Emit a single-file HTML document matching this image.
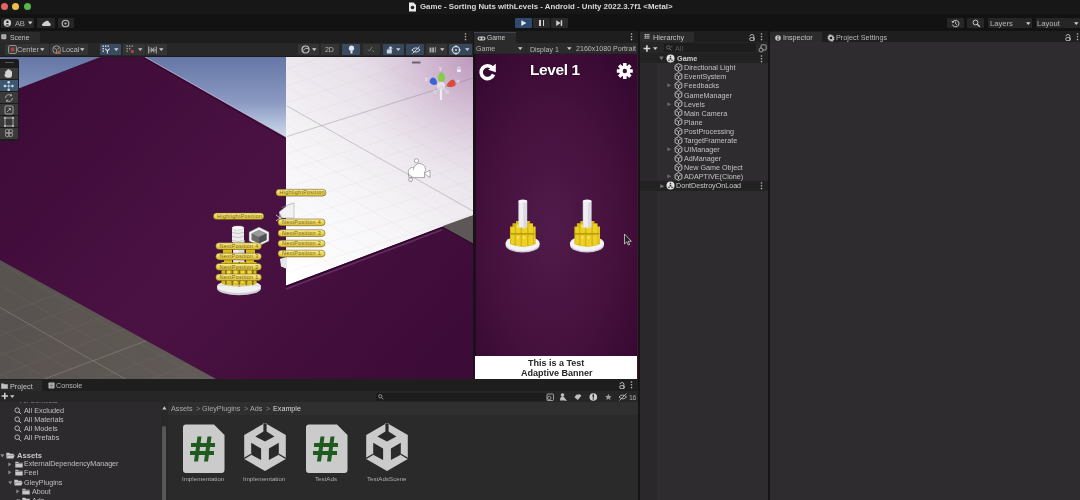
<!DOCTYPE html>
<html><head><meta charset="utf-8">
<style>
*{margin:0;padding:0;box-sizing:border-box}
html,body{width:1080px;height:500px;overflow:hidden;background:#141414;font-family:"Liberation Sans",sans-serif;color:#c4c4c4}
.a{position:absolute}
.t{position:absolute;white-space:nowrap;line-height:1;will-change:transform}
.btn{position:absolute;background:#272727;border-radius:1px}
.sbtn{position:absolute;background:#343434;border-radius:1px}
.blue{background:#3a4a63}
</style></head><body>
<!-- title bar + toolbar -->
<div class="a" style="left:0;top:0;width:1080px;height:31px;background:#121212"></div><div class="a" style="left:0;top:0;width:1080px;height:14.4px;background:#161716"></div>
<div class="a" style="left:1px;top:3px;width:7px;height:7px;border-radius:50%;background:#e36464"></div>
<div class="a" style="left:12px;top:3px;width:7px;height:7px;border-radius:50%;background:#e8bd4a"></div>
<div class="a" style="left:24px;top:3px;width:7px;height:7px;border-radius:50%;background:#55b64c"></div>


<!-- TOP -->
<svg class="a" style="left:408px;top:2px" width="9" height="10" viewBox="0 0 9 10"><path d="M1 0.5h4.5l2.5 2.5v6.5h-7z" fill="#e8e8e8"/><circle cx="4.5" cy="5.5" r="1.8" fill="#222"/></svg>
<div class="t" style="left:419.5px;top:2.5px;font-size:7.85px;font-weight:bold;color:#d8d8d8">Game - Sorting Nuts withLevels - Android - Unity 2022.3.7f1 &lt;Metal&gt;</div>

<div class="btn" style="left:1px;top:18px;width:33px;height:10px;background:#262626"></div>
<svg class="a" style="left:3px;top:19px" width="9" height="8" viewBox="0 0 9 8"><circle cx="4.4" cy="4" r="3.7" fill="#d0d0d0"/><circle cx="4.4" cy="2.9" r="1.2" fill="#262626"/><path d="M2.4 6.4q2-2.2 4 0z" fill="#262626"/></svg>
<div class="t" style="left:15.2px;top:19.6px;font-size:7.6px;color:#aaaaaa;letter-spacing:-0.2px">AB</div>
<svg class="a" style="left:27.5px;top:21px" width="5" height="4"><path d="M0 0.5h4.5l-2.25 3z" fill="#d0d0d0"/></svg>
<div class="btn" style="left:37px;top:18px;width:18px;height:10px;background:#262626"></div>
<svg class="a" style="left:41.5px;top:20px" width="9" height="6" viewBox="0 0 9 6"><path d="M1.2 6a1.3 1.3 0 0 1 0-2.6a1.5 1.5 0 0 1 1.8-1.3a2.3 2.3 0 0 1 4.3 0.6a1.7 1.7 0 0 1 0.3 3.3z" fill="#d0d0d0"/></svg>
<div class="btn" style="left:57.5px;top:18px;width:16.5px;height:10px;background:#262626"></div>
<svg class="a" style="left:61px;top:18.5px" width="9" height="9" viewBox="0 0 9 9"><circle cx="4.5" cy="4.5" r="3.3" fill="none" stroke="#bdbdbd" stroke-width="1.1"/><circle cx="4.5" cy="4.5" r="1.1" fill="#bdbdbd"/></svg>

<div class="btn" style="left:514.5px;top:18px;width:17.5px;height:10px;background:#2f4a6e"></div>
<svg class="a" style="left:520.5px;top:20px" width="6" height="6.5"><path d="M0.3 0.2L5.4 3.1L0.3 6z" fill="#e6eaf0"/></svg>
<div class="btn" style="left:532.5px;top:18px;width:17px;height:10px;background:#2a2a2a"></div>
<div class="a" style="left:538.8px;top:20.3px;width:1.8px;height:5.5px;background:#d0d0d0"></div>
<div class="a" style="left:542.5px;top:20.3px;width:1.8px;height:5.5px;background:#d0d0d0"></div>
<div class="btn" style="left:550.5px;top:18px;width:17px;height:10px;background:#2a2a2a"></div>
<svg class="a" style="left:555.8px;top:20px" width="7" height="6.5"><path d="M0.2 0.2L4.6 3.1L0.2 6z" fill="#d0d0d0"/><rect x="4.7" y="0.3" width="1.5" height="5.6" fill="#d0d0d0"/></svg>

<div class="btn" style="left:947px;top:18px;width:17px;height:10px;background:#262626"></div>
<svg class="a" style="left:951px;top:18.5px" width="9" height="9" viewBox="0 0 9 9"><path d="M1.6 3.2A3.3 3.3 0 1 1 1.5 5.6" fill="none" stroke="#c8c8c8" stroke-width="1"/><path d="M0.3 1.8l1.6 2.4l1.6-1.6z" fill="#c8c8c8"/><path d="M4.6 2.6v2.1l1.3 1" fill="none" stroke="#c8c8c8" stroke-width="0.9"/></svg>
<div class="btn" style="left:967px;top:18px;width:17px;height:10px;background:#262626"></div>
<svg class="a" style="left:971.5px;top:19px" width="9" height="9" viewBox="0 0 9 9"><circle cx="3.5" cy="3.5" r="2.4" fill="none" stroke="#c8c8c8" stroke-width="1"/><path d="M5.3 5.3L7.8 7.8" stroke="#c8c8c8" stroke-width="1.3"/></svg>
<div class="btn" style="left:988px;top:18px;width:44px;height:10px;background:#262626"></div>
<div class="t" style="left:990px;top:19.5px;font-size:7.6px;color:#b8b8b8">Layers</div>
<svg class="a" style="left:1025.5px;top:21.5px" width="5" height="4"><path d="M0 0.3h4.5l-2.25 2.8z" fill="#d0d0d0"/></svg>
<div class="btn" style="left:1035.5px;top:18px;width:44.5px;height:10px;background:#262626"></div>
<div class="t" style="left:1037px;top:19.5px;font-size:7.6px;color:#b8b8b8">Layout</div>
<svg class="a" style="left:1073.5px;top:21.5px" width="5" height="4"><path d="M0 0.3h4.5l-2.25 2.8z" fill="#d0d0d0"/></svg>

<!-- tab bar row -->
<div class="a" style="left:0;top:31px;width:1080px;height:12px;background:#1e1e1f"></div>

<!-- ===== SCENE PANEL ===== -->
<div class="a" style="left:0;top:32px;width:40px;height:11px;background:#2b2b2b"></div>
<svg class="a" style="left:1px;top:34px" width="6" height="6"><rect x="0.3" y="0.3" width="5" height="5" rx="1" fill="#b8b8b8"/><path d="M0.3 2.8h5M2.8 0.3v5" stroke="#8a8a8a" stroke-width="0.5"/></svg>
<div class="t" style="left:10px;top:34.7px;font-size:6.9px;color:#c4c4c4">Scene</div>
<svg class="a" style="left:463.5px;top:33px" width="3" height="8"><circle cx="1.5" cy="1" r="0.8" fill="#bbb"/><circle cx="1.5" cy="3.8" r="0.8" fill="#bbb"/><circle cx="1.5" cy="6.6" r="0.8" fill="#bbb"/></svg>
<div class="a" style="left:0;top:43px;width:473px;height:14px;background:#272727;border-bottom:1px solid #1c1c1c"></div>
<!-- center/local -->
<div class="sbtn" style="left:4.5px;top:44px;width:44px;height:11px"></div>
<svg class="a" style="left:7.5px;top:45px" width="9" height="9"><rect x="0.6" y="0.6" width="7.8" height="7.8" rx="1.2" fill="none" stroke="#9a9a9a" stroke-width="1"/><rect x="2.5" y="2.5" width="4" height="4" fill="#9a4c40"/></svg>
<div class="t" style="left:17px;top:46px;font-size:7.3px;color:#b8b8b8">Center</div>
<svg class="a" style="left:40.3px;top:48px" width="5" height="4"><path d="M0 0.3h4.5l-2.25 2.8z" fill="#d0d0d0"/></svg>
<div class="sbtn" style="left:50px;top:44px;width:38.3px;height:11px"></div>
<svg class="a" style="left:52px;top:45px" width="10" height="10"><circle cx="4.6" cy="4.6" r="3.8" fill="none" stroke="#9a9a9a" stroke-width="1"/><path d="M1.8 2.6L4.6 4.6L7.4 2.6M4.6 4.6V8.4" stroke="#9a9a9a" stroke-width="0.9" fill="none"/><rect x="5.6" y="5.8" width="3" height="3.2" fill="#a9623c"/></svg>
<div class="t" style="left:62.3px;top:46px;font-size:7.3px;color:#b8b8b8">Local</div>
<svg class="a" style="left:80.3px;top:48px" width="5" height="4"><path d="M0 0.3h4.5l-2.25 2.8z" fill="#d0d0d0"/></svg>
<!-- snapping group -->
<div class="sbtn" style="left:100px;top:44px;width:21px;height:11px;background:#3a4a60"></div>
<svg class="a" style="left:102px;top:45px" width="9" height="9"><g fill="#d8dee8"><rect x="0.5" y="0.5" width="1.4" height="1.4"/><rect x="3" y="0.5" width="1.4" height="1.4"/><rect x="5.5" y="0.5" width="1.4" height="1.4"/><rect x="0.5" y="3" width="1.4" height="1.4"/><rect x="0.5" y="5.5" width="1.4" height="1.4"/></g><path d="M3.3 3.6L5.4 6L7.6 3.6M5.4 6V8.6" stroke="#d8dee8" stroke-width="1.1" fill="none"/></svg>
<svg class="a" style="left:113.8px;top:48px" width="5" height="4"><path d="M0 0.3h4.5l-2.25 2.8z" fill="#d0d6e0"/></svg>
<div class="sbtn" style="left:123px;top:44px;width:21.5px;height:11px"></div>
<svg class="a" style="left:125.5px;top:45px" width="9" height="9"><g fill="#a8a8a8"><rect x="0.5" y="0.5" width="1.3" height="1.3"/><rect x="3" y="0.5" width="1.3" height="1.3"/><rect x="5.5" y="0.5" width="1.3" height="1.3"/><rect x="0.5" y="3" width="1.3" height="1.3"/><rect x="0.5" y="5.5" width="1.3" height="1.3"/><rect x="3" y="3" width="1.3" height="1.3"/></g><rect x="4.8" y="5" width="3" height="3" fill="#a04050"/></svg>
<svg class="a" style="left:137.6px;top:48px" width="5" height="4"><path d="M0 0.3h4.5l-2.25 2.8z" fill="#c0c0c0"/></svg>
<div class="sbtn" style="left:146px;top:44px;width:20.5px;height:11px"></div>
<svg class="a" style="left:148px;top:45.5px" width="9" height="8"><path d="M0.7 0.5v7M8.3 0.5v7M0.7 4h7.6M2.6 1.5l1.9 2.5l1.9-2.5M2.6 6.5l1.9-2.5l1.9 2.5" stroke="#a8a8a8" stroke-width="1.1" fill="none"/></svg>
<svg class="a" style="left:158.8px;top:48px" width="5" height="4"><path d="M0 0.3h4.5l-2.25 2.8z" fill="#c8c8c8"/></svg>
<!-- right tool group -->
<div class="sbtn" style="left:297.7px;top:44px;width:21px;height:11px"></div>
<svg class="a" style="left:300.5px;top:45px" width="9" height="9"><circle cx="4.5" cy="4.5" r="3.5" fill="none" stroke="#c0c0c0" stroke-width="1.2"/><path d="M2 5.5q2.5-3.5 5.5-1.8" stroke="#c0c0c0" stroke-width="0.9" fill="none"/></svg>
<svg class="a" style="left:311.5px;top:48px" width="5" height="4"><path d="M0 0.3h4.5l-2.25 2.8z" fill="#d0d0d0"/></svg>
<div class="sbtn" style="left:321.3px;top:44px;width:18px;height:11px"></div>
<div class="t" style="left:324.6px;top:46px;font-size:7px;color:#b8b8b8;letter-spacing:-0.2px">2D</div>
<div class="sbtn" style="left:342px;top:44px;width:18px;height:11px;background:#3a4a60"></div>
<svg class="a" style="left:347.5px;top:45px" width="7" height="10"><circle cx="3.5" cy="3.2" r="2.6" fill="#dfe6ee"/><rect x="2.5" y="5.5" width="2" height="3" fill="#dfe6ee"/></svg>
<div class="sbtn" style="left:362.8px;top:44px;width:17.6px;height:11px"></div>
<svg class="a" style="left:367px;top:46px" width="9" height="7"><path d="M1 3.5l1.5 1.5l2.5-4M5.5 4.5l1.5 1.5" stroke="#777" stroke-width="1" fill="none"/></svg>
<div class="sbtn" style="left:383.3px;top:44px;width:20.6px;height:11px;background:#37475c"></div>
<svg class="a" style="left:385.5px;top:45px" width="9" height="10"><path d="M0.8 4.5h5v4h-5z" fill="#cfd5de"/><path d="M4.5 1l2.5 2.5h-1.6v2h-1.8v-2h-1.6z" fill="#cfd5de"/></svg>
<svg class="a" style="left:396.3px;top:48px" width="5" height="4"><path d="M0 0.3h4.5l-2.25 2.8z" fill="#ccd2dc"/></svg>
<div class="sbtn" style="left:406.4px;top:44px;width:17.2px;height:11px;background:#37475c"></div>
<svg class="a" style="left:410.5px;top:45.5px" width="10" height="8"><path d="M0.8 4q4-4.2 8.2 0q-4 4.2-8.2 0z" fill="none" stroke="#cfd5de" stroke-width="1"/><path d="M1.5 7.5L8.5 0.7" stroke="#cfd5de" stroke-width="1"/></svg>
<div class="sbtn" style="left:426px;top:44px;width:21px;height:11px"></div>
<svg class="a" style="left:429px;top:46px" width="9" height="7"><path d="M0.5 1.5h2v5h-2zM3.2 1.5h2v5h-2z" fill="#a8a8a8"/><path d="M6.5 1v5.5" stroke="#a8a8a8" stroke-width="0.8"/></svg>
<svg class="a" style="left:440px;top:48px" width="5" height="4"><path d="M0 0.3h4.5l-2.25 2.8z" fill="#c8c8c8"/></svg>
<div class="sbtn" style="left:449px;top:44px;width:22.5px;height:11px;background:#37475c"></div>
<svg class="a" style="left:451px;top:44.5px" width="10" height="10"><circle cx="5" cy="5" r="3.6" fill="none" stroke="#d0d6de" stroke-width="1.1"/><path d="M5 0.3v2.3M5 7.4v2.3M0.3 5h2.3M7.4 5h2.3" stroke="#d0d6de" stroke-width="1.1"/><circle cx="5" cy="5" r="1" fill="#d0d6de"/></svg>
<svg class="a" style="left:464.5px;top:48px" width="5" height="4"><path d="M0 0.3h4.5l-2.25 2.8z" fill="#ccd2dc"/></svg>

<!-- scene view -->
<div id="sceneview" class="a" style="left:0;top:57px;width:473px;height:322px;background:#47103f;overflow:hidden">
<svg width="473" height="322" viewBox="0 57 473 322" style="position:absolute;left:0;top:0">
<defs>
<linearGradient id="sky" x1="0" y1="57" x2="0" y2="140" gradientUnits="userSpaceOnUse"><stop offset="0" stop-color="#6676a6"/><stop offset="0.55" stop-color="#8a9ac2"/><stop offset="1" stop-color="#d4e0f0"/></linearGradient>
<linearGradient id="wp" x1="300" y1="280" x2="473" y2="57" gradientUnits="userSpaceOnUse"><stop offset="0" stop-color="#ffffff"/><stop offset="0.4" stop-color="#f5f3f6"/><stop offset="0.75" stop-color="#e6dee8"/><stop offset="1" stop-color="#d8c8da"/></linearGradient>
<radialGradient id="wp2" cx="473" cy="57" r="120" gradientUnits="userSpaceOnUse"><stop offset="0" stop-color="#b98fb8" stop-opacity="0.85"/><stop offset="0.5" stop-color="#c8a8c8" stop-opacity="0.4"/><stop offset="1" stop-color="#d8c8d8" stop-opacity="0"/></radialGradient>
<linearGradient id="pur" x1="60" y1="57" x2="420" y2="379" gradientUnits="userSpaceOnUse"><stop offset="0" stop-color="#3e0b38"/><stop offset="0.5" stop-color="#4a1243"/><stop offset="1" stop-color="#3d0b37"/></linearGradient>
<linearGradient id="gnd" x1="0" y1="260" x2="210" y2="379" gradientUnits="userSpaceOnUse"><stop offset="0" stop-color="#58534f"/><stop offset="1" stop-color="#625c58"/></linearGradient>
</defs>
<rect x="0" y="57" width="473" height="322" fill="url(#pur)"/>
<path d="M0 57H101.5L0 96Z" fill="url(#sky)"/><path d="M101.5 57L0 96" stroke="#2a0626" stroke-width="0.8" opacity="0.8"/>
<path d="M145 57H286V137Z" fill="url(#sky)"/>
<path d="M145 57L286 137" stroke="#e8eef8" stroke-width="0.8" opacity="0.7"/><path d="M144 58.2L285.5 138.6" stroke="#24061f" stroke-width="0.9" opacity="0.7"/>
<path d="M286 57H473V215.5L286 285.4Z" fill="url(#wp)"/><path d="M286 57H473V215.5L286 285.4Z" fill="url(#wp2)"/>
<clipPath id="wc"><path d="M286 57H473V215.5L286 285.4Z"/></clipPath><g clip-path="url(#wc)" stroke="#a99eab" stroke-width="0.5" opacity="0.15"><line x1="287.0" y1="0.5" x2="473.0" y2="-58.1"/><line x1="287.0" y1="17.5" x2="473.0" y2="-41.1"/><line x1="287.0" y1="34.5" x2="473.0" y2="-24.1"/><line x1="287.0" y1="51.5" x2="473.0" y2="-7.1"/><line x1="287.0" y1="68.5" x2="473.0" y2="9.9"/><line x1="287.0" y1="85.5" x2="473.0" y2="26.9"/><line x1="287.0" y1="102.5" x2="473.0" y2="43.9"/><line x1="287.0" y1="119.5" x2="473.0" y2="60.9"/><line x1="287.0" y1="136.5" x2="473.0" y2="77.9"/><line x1="287.0" y1="153.5" x2="473.0" y2="94.9"/><line x1="287.0" y1="170.5" x2="473.0" y2="111.9"/><line x1="287.0" y1="187.5" x2="473.0" y2="128.9"/><line x1="287.0" y1="204.5" x2="473.0" y2="145.9"/><line x1="287.0" y1="221.5" x2="473.0" y2="162.9"/><line x1="287.0" y1="238.5" x2="473.0" y2="179.9"/><line x1="287.0" y1="255.5" x2="473.0" y2="196.9"/><line x1="287.0" y1="272.5" x2="473.0" y2="213.9"/><line x1="287.0" y1="289.5" x2="473.0" y2="230.9"/><line x1="287.0" y1="306.5" x2="473.0" y2="247.9"/><line x1="287.0" y1="323.5" x2="473.0" y2="264.9"/><line x1="287.0" y1="340.5" x2="473.0" y2="281.9"/><line x1="287.0" y1="357.5" x2="473.0" y2="298.9"/><line x1="287.0" y1="-160.0" x2="473.0" y2="-54.7"/><line x1="287.0" y1="-141.0" x2="473.0" y2="-35.7"/><line x1="287.0" y1="-122.0" x2="473.0" y2="-16.7"/><line x1="287.0" y1="-103.0" x2="473.0" y2="2.3"/><line x1="287.0" y1="-84.0" x2="473.0" y2="21.3"/><line x1="287.0" y1="-65.0" x2="473.0" y2="40.3"/><line x1="287.0" y1="-46.0" x2="473.0" y2="59.3"/><line x1="287.0" y1="-27.0" x2="473.0" y2="78.3"/><line x1="287.0" y1="-8.0" x2="473.0" y2="97.3"/><line x1="287.0" y1="11.0" x2="473.0" y2="116.3"/><line x1="287.0" y1="30.0" x2="473.0" y2="135.3"/><line x1="287.0" y1="49.0" x2="473.0" y2="154.3"/><line x1="287.0" y1="68.0" x2="473.0" y2="173.3"/><line x1="287.0" y1="87.0" x2="473.0" y2="192.3"/><line x1="287.0" y1="106.0" x2="473.0" y2="211.3"/><line x1="287.0" y1="125.0" x2="473.0" y2="230.3"/><line x1="287.0" y1="144.0" x2="473.0" y2="249.3"/><line x1="287.0" y1="163.0" x2="473.0" y2="268.3"/><line x1="287.0" y1="182.0" x2="473.0" y2="287.3"/><line x1="287.0" y1="201.0" x2="473.0" y2="306.3"/><line x1="287.0" y1="220.0" x2="473.0" y2="325.3"/><line x1="287.0" y1="239.0" x2="473.0" y2="344.3"/></g>
<g clip-path="url(#wc)"><path d="M287 136.5L473 78" stroke="#8a7f8a" stroke-width="0.6" opacity="0.6"/>
<path d="M287 106L473 211" stroke="#8a7f8a" stroke-width="0.6" opacity="0.6"/></g>
<path d="M442 226.2L473 215.3V243.5Z" fill="#5d5757"/>
<path d="M286 286.6L442 227.4" fill="none" stroke="#2c0628" stroke-width="1.2"/>
<path d="M286 288.9L442 229.7" fill="none" stroke="#6a3566" stroke-width="1.6" opacity="0.85"/><path d="M442 227L473 244" fill="none" stroke="#2c0628" stroke-width="0.8"/>
<path d="M0 260L216 379H0Z" fill="url(#gnd)"/>
<clipPath id="gc"><path d="M0 260L216 379H0Z"/></clipPath>
<g clip-path="url(#gc)" stroke="#7e7872" stroke-width="0.5" opacity="0.35"><line x1="0.0" y1="175.5" x2="220.0" y2="301.1"/><line x1="0.0" y1="197.5" x2="220.0" y2="323.1"/><line x1="0.0" y1="219.5" x2="220.0" y2="345.1"/><line x1="0.0" y1="241.5" x2="220.0" y2="367.1"/><line x1="0.0" y1="263.5" x2="220.0" y2="389.1"/><line x1="0.0" y1="285.5" x2="220.0" y2="411.1"/><line x1="0.0" y1="329.5" x2="220.0" y2="455.1"/><line x1="0.0" y1="351.5" x2="220.0" y2="477.1"/><line x1="0.0" y1="373.5" x2="220.0" y2="499.1"/><line x1="0.0" y1="395.5" x2="220.0" y2="521.1"/><line x1="0.0" y1="417.5" x2="220.0" y2="543.1"/><line x1="0.0" y1="315.6" x2="220.0" y2="233.1"/><line x1="0.0" y1="335.6" x2="220.0" y2="253.1"/><line x1="0.0" y1="355.6" x2="220.0" y2="273.1"/><line x1="0.0" y1="375.6" x2="220.0" y2="293.1"/><line x1="0.0" y1="415.6" x2="220.0" y2="333.1"/><line x1="0.0" y1="435.6" x2="220.0" y2="353.1"/><line x1="0.0" y1="455.6" x2="220.0" y2="373.1"/><line x1="0.0" y1="475.6" x2="220.0" y2="393.1"/><line x1="0.0" y1="495.6" x2="220.0" y2="413.1"/><line x1="0.0" y1="515.6" x2="220.0" y2="433.1"/><line x1="0.0" y1="535.6" x2="220.0" y2="453.1"/></g>
<g clip-path="url(#gc)" stroke="#a09a92" stroke-width="0.7" opacity="0.6"><path d="M0 307.5L125 379"/><path d="M45 378.75L160 335.6"/></g>
</svg>

<svg width="473" height="322" viewBox="0 57 473 322" style="position:absolute;left:0;top:0">
<defs>
<linearGradient id="lbl" x1="0" y1="0" x2="0" y2="1"><stop offset="0" stop-color="#faf0a0"/><stop offset="0.45" stop-color="#eed85a"/><stop offset="1" stop-color="#d6b834"/></linearGradient>
</defs>
<!-- gizmo -->
<rect x="412" y="61.5" width="8.5" height="2" fill="#6e6470"/>
<path d="M441 85V100" stroke="#eee" stroke-width="2.2"/>
<circle cx="441" cy="86" r="4" fill="#e4e0e6"/>
<path d="M441 86L437.5 90.5M441 86L446 91" stroke="#d8d4da" stroke-width="1.3"/>
<circle cx="435" cy="92" r="2.2" fill="#d5d0d8"/><circle cx="447" cy="92" r="2.2" fill="#d5d0d8"/>
<path d="M438 80.5Q437.5 73 441.5 72Q445.5 73 445 80.5Q441.5 83 438 80.5Z" fill="#86cc4a"/>
<path d="M429.5 82Q430 77.5 433.5 77.5Q437 78.5 437 84Q432 86.5 429.5 82Z" fill="#3a62d6"/>
<path d="M446.5 86Q448 80.5 453 79.5Q456 81 455.5 85.5Q450.5 88.5 446.5 86Z" fill="#d84c3c"/>
<text x="439" y="70" font-size="5.5" fill="#f4f4f4" font-family="Liberation Sans">y</text>
<text x="425" y="81" font-size="5.5" fill="#f4f4f4" font-family="Liberation Sans">z</text>
<text x="456.5" y="82.5" font-size="5.5" fill="#f4f4f4" font-family="Liberation Sans">x</text>
<path d="M457.5 69.5v-1.2a1.4 1.4 0 0 1 2.8 0v1.2" fill="none" stroke="#f0eef2" stroke-width="0.7"/><rect x="457" y="69.3" width="3.8" height="2.8" fill="#f0eef2"/>
<!-- cloud (directional light / camera?) -->
<g stroke="#8e8a92" stroke-width="0.7" fill="#fdfdfd">
<circle cx="416.5" cy="160.8" r="2.1"/>
<path d="M424 173.5L430 170.2V177.6Z"/>
<circle cx="412.8" cy="172" r="4.6"/>
<circle cx="419.5" cy="169.5" r="6"/>
<rect x="412" y="170" width="12.5" height="7.5" rx="2" stroke="none"/>
<path d="M408.5 173.5V176.5Q408.5 177.6 410 177.6H424.5V172" fill="none"/>
<circle cx="410.5" cy="179.6" r="2" fill="none"/>
</g>
<!-- left nut -->
<ellipse cx="239" cy="288.5" rx="22" ry="6.8" fill="#cfcdd6"/>
<ellipse cx="239" cy="286.5" rx="22" ry="6.5" fill="#f2f2f4"/>
<rect x="233" y="240" width="11.5" height="32" fill="#dcdce2"/>
<rect x="234.5" y="240" width="4" height="32" fill="#f0f0f4"/>
<path d="M221.5 262h35v22q-17.5 5-35 0z" fill="#d8bc1c"/>
<g fill="#8a7010"><rect x="225" y="262" width="1.6" height="23"/><rect x="231.5" y="262" width="1.6" height="24"/><rect x="238.5" y="262" width="1.6" height="24.5"/><rect x="245.5" y="262" width="1.6" height="24"/><rect x="252" y="262" width="1.6" height="23"/></g>
<g fill="#f0d840"><rect x="227" y="266" width="3" height="16"/><rect x="234" y="266" width="3" height="17"/><rect x="241" y="266" width="3" height="17"/><rect x="248" y="266" width="3" height="16"/></g>
<g fill="#d8bc1c"><rect x="223" y="249" width="9" height="5"/><rect x="246" y="249" width="9" height="5"/><rect x="224" y="259" width="8" height="4"/><rect x="246" y="259" width="8" height="4"/></g>
<path d="M218 286q3-2 5 0q3-2 5 0q3-2 5 0q3-2 5 0q3-2 5 0q3-2 5 0q3-2 5 0q3-2 5 0q2-1 3 0" fill="none" stroke="#d0d0d6" stroke-width="0.8"/>
<!-- database icon -->
<g><ellipse cx="238" cy="228" rx="6" ry="2" fill="#f6f6f6"/><rect x="232" y="228" width="12" height="14" fill="#ececec"/><path d="M232 232.5q6 2 12 0M232 236.5q6 2 12 0M232 240.5q6 2 12 0" stroke="#9a9a9a" stroke-width="0.5" fill="none"/><ellipse cx="238" cy="228" rx="6" ry="2" fill="#fafafa" stroke="#aaa" stroke-width="0.4"/></g>
<!-- cube icon -->
<path d="M259 227L269 232V241L259 246L249 241V232Z" fill="#f4f4f4" stroke="#555" stroke-width="0.5"/>
<path d="M259 230L266.5 233.5V240L259 243.5L251.5 240V233.5Z" fill="#6a6a6a"/>
<path d="M251.5 233.5L259 237L266.5 233.5L259 230Z" fill="#9a9a9a"/>
<path d="M259 237V243.5L266.5 240V233.5Z" fill="#505050"/>
<!-- right cluster -->
<path d="M279 212L288 205L294 203V218H282Z" fill="#f2f2f2" stroke="#9a9a9a" stroke-width="0.5"/>
<path d="M281.5 207.5L294 203" stroke="#bbb" stroke-width="0.4"/>
<path d="M276 215l8 6M276 221l8-6M280 213v10" stroke="#e8e8e8" stroke-width="0.8"/>
<path d="M280 259L287 256.5V269L281 266.5Z" fill="#e6e6ea"/><path d="M280 259L287 256.5" stroke="#999" stroke-width="0.4"/>
<!-- labels -->
<g font-family="Liberation Sans" font-size="5.4" fill="#76662a" letter-spacing="0.3">
<rect x="213.4" y="212.9" width="50.4" height="6.7" rx="3.3" fill="url(#lbl)" stroke="#5a4808" stroke-width="0.5"/><text x="217" y="218">HighlightPosition</text>
<rect x="215.8" y="242.8" width="45.6" height="6.7" rx="3.3" fill="url(#lbl)" stroke="#5a4808" stroke-width="0.5"/><text x="219.5" y="247.8">NextPosition  4</text>
<rect x="215.8" y="253.2" width="45.6" height="6.7" rx="3.3" fill="url(#lbl)" stroke="#5a4808" stroke-width="0.5"/><text x="219.5" y="258.2">NextPosition  3</text>
<rect x="215.8" y="263.5" width="45.6" height="6.7" rx="3.3" fill="url(#lbl)" stroke="#5a4808" stroke-width="0.5"/><text x="219.5" y="268.5">NextPosition  2</text>
<rect x="215.8" y="274" width="45.6" height="6.7" rx="3.3" fill="url(#lbl)" stroke="#5a4808" stroke-width="0.5"/><text x="219.5" y="279">NextPosition  1</text>
<rect x="276" y="189.3" width="50" height="6.8" rx="3.4" fill="url(#lbl)" stroke="#5a4808" stroke-width="0.5"/><text x="279.5" y="194.4">HighlightPosition</text>
<rect x="278" y="219" width="47" height="6.7" rx="3.3" fill="url(#lbl)" stroke="#5a4808" stroke-width="0.5"/><text x="282" y="224">NextPosition  4</text>
<rect x="278" y="229.8" width="47" height="6.7" rx="3.3" fill="url(#lbl)" stroke="#5a4808" stroke-width="0.5"/><text x="282" y="234.8">NextPosition  3</text>
<rect x="278" y="240.2" width="47" height="6.7" rx="3.3" fill="url(#lbl)" stroke="#5a4808" stroke-width="0.5"/><text x="282" y="245.2">NextPosition  2</text>
<rect x="278" y="250.2" width="47" height="6.7" rx="3.3" fill="url(#lbl)" stroke="#5a4808" stroke-width="0.5"/><text x="282" y="255.2">NextPosition  1</text>
</g>
</svg>


</div>
<!-- tool palette -->
<div class="a" style="left:0;top:58.5px;width:19px;height:82px;background:#1c1c1c;border-radius:0 2px 2px 0"></div>
<div class="a" style="left:4.5px;top:61.5px;width:9px;height:1.5px;background:#555"></div>
<div class="a" style="left:0;top:68.2px;width:17.5px;height:10.8px;background:#3a3a3a"></div>
<div class="a" style="left:0;top:80.3px;width:17.5px;height:10.8px;background:#3e566f"></div>
<div class="a" style="left:0;top:92.3px;width:17.5px;height:10.8px;background:#3a3a3a"></div>
<div class="a" style="left:0;top:104.3px;width:17.5px;height:10.8px;background:#3a3a3a"></div>
<div class="a" style="left:0;top:116.3px;width:17.5px;height:10.8px;background:#3a3a3a"></div>
<div class="a" style="left:0;top:128.3px;width:17.5px;height:10.8px;background:#3a3a3a"></div>
<svg class="a" style="left:0;top:68px" width="18" height="72">
<path d="M5.2 6.5v-2.6q0-0.8 0.7-0.8q0.7 0 0.7 0.8v-1.6q0-0.8 0.7-0.8q0.7 0 0.7 0.8v-0.6q0-0.8 0.7-0.8q0.7 0 0.7 0.8v0.8q0-0.8 0.7-0.8q0.7 0 0.7 0.8v1.2q0-0.7 0.6-0.7q0.6 0 0.6 0.7v3.2q0 2.8-2.8 2.8h-1.8q-2.4 0-3.2-3z" fill="#d4d4d4"/>
<g fill="#c8dcf0"><circle cx="8.7" cy="14.3" r="1.3"/><circle cx="8.7" cy="21.7" r="1.3"/><circle cx="5" cy="18" r="1.3"/><circle cx="12.4" cy="18" r="1.3"/><circle cx="8.7" cy="18" r="0.9"/></g><path d="M8.7 15.5v5M6.2 18h5" stroke="#a8c0d8" stroke-width="0.6"/>
<path d="M5.5 30a3.6 3.6 0 0 1 6-2.5M12.5 30a3.6 3.6 0 0 1-6 2.5" fill="none" stroke="#b0b0b0" stroke-width="0.9"/><path d="M11.8 25.8v2.4h-2.4zM6.2 34.2v-2.4h2.4z" fill="#b0b0b0"/>
<rect x="5" y="38" width="8" height="8" rx="1" fill="none" stroke="#b0b0b0" stroke-width="0.9"/><path d="M7 44l3.5-3.5M8.5 40.5h2v2" stroke="#b0b0b0" stroke-width="0.9" fill="none"/>
<path d="M5 50.5v7M13 50.5v7M5.5 50h7M5.5 58h7" stroke="#b0b0b0" stroke-width="0.9"/><g fill="#b0b0b0"><rect x="4" y="49" width="2" height="2"/><rect x="12" y="49" width="2" height="2"/><rect x="4" y="57" width="2" height="2"/><rect x="12" y="57" width="2" height="2"/></g>
<circle cx="7.3" cy="63.3" r="2" fill="none" stroke="#b0b0b0" stroke-width="0.8"/><circle cx="10.7" cy="63.3" r="2" fill="none" stroke="#b0b0b0" stroke-width="0.8"/><circle cx="7.3" cy="66.7" r="2" fill="none" stroke="#b0b0b0" stroke-width="0.8"/><circle cx="10.7" cy="66.7" r="2" fill="none" stroke="#b0b0b0" stroke-width="0.8"/>
</svg>

<!-- dividers -->
<div class="a" style="left:473px;top:31px;width:1px;height:469px;background:#141414"></div>

<!-- ===== GAME PANEL ===== -->
<div class="a" style="left:474px;top:32px;width:41.5px;height:10.5px;background:#2b2b2b;border-top:1px solid #3a4558"></div>
<svg class="a" style="left:477px;top:35.5px" width="9" height="5"><rect x="0.5" y="0.5" width="8" height="4" rx="2" fill="#c8c8c8"/><circle cx="2.8" cy="2.5" r="1" fill="#2b2b2b"/><circle cx="6.2" cy="2.5" r="1" fill="#2b2b2b"/></svg>
<div class="t" style="left:487.3px;top:35.0px;font-size:6.7px;color:#c8c8c8">Game</div>
<svg class="a" style="left:630px;top:33px" width="3" height="8"><circle cx="1.5" cy="1" r="0.8" fill="#bbb"/><circle cx="1.5" cy="3.8" r="0.8" fill="#bbb"/><circle cx="1.5" cy="6.6" r="0.8" fill="#bbb"/></svg>
<div class="a" style="left:474px;top:42.5px;width:164px;height:11.5px;background:#262626"></div>
<div class="a" style="left:474px;top:43px;width:51px;height:10px;background:#2b2b2b"></div>
<div class="t" style="left:476px;top:45.5px;font-size:7.1px;color:#b8b8b8">Game</div>
<svg class="a" style="left:518.3px;top:47px" width="5" height="4"><path d="M0 0.3h4.5l-2.25 2.8z" fill="#d0d0d0"/></svg>
<div class="a" style="left:527px;top:43px;width:47px;height:10px;background:#2b2b2b"></div>
<div class="t" style="left:529.9px;top:45.5px;font-size:7px;color:#b8b8b8">Display 1</div>
<svg class="a" style="left:567.4px;top:47px" width="5" height="4"><path d="M0 0.3h4.5l-2.25 2.8z" fill="#d0d0d0"/></svg>
<div class="a" style="left:574.5px;top:43px;width:62.5px;height:10px;background:#2b2b2b"></div>
<div class="t" style="left:575.7px;top:45.5px;font-size:7.1px;color:#b8b8b8">2160x1080 Portrait</div>
<div id="gameview" class="a" style="left:474px;top:54px;width:164px;height:325px;background:#47103f;overflow:hidden">
<div class="a" style="left:0;top:0;width:163px;height:325px;background:radial-gradient(ellipse 110px 210px at 78px 175px,#501a4a 0%,#48123f 50%,#360931 100%)"></div>
<svg width="163" height="325" viewBox="474 54 163 325" style="position:absolute;left:0;top:0">
<!-- refresh icon -->
<path d="M492.5 68.2A6.4 6.4 0 1 0 493.5 74.5" fill="none" stroke="#fff" stroke-width="3.6"/>
<path d="M488.2 69.8L495.8 63.8L495.8 72.2Z" fill="#fff"/>
<!-- gear -->
<g transform="translate(624.8,71)">
<circle r="5.6" fill="#fff"/>
<g fill="#fff"><rect x="-1.8" y="-8" width="3.6" height="16" rx="0.6"/><rect x="-1.8" y="-8" width="3.6" height="16" rx="0.6" transform="rotate(45)"/><rect x="-1.8" y="-8" width="3.6" height="16" rx="0.6" transform="rotate(90)"/><rect x="-1.8" y="-8" width="3.6" height="16" rx="0.6" transform="rotate(135)"/></g>
<circle r="2.2" fill="#3f0d3a"/>
</g>
<g transform="translate(0,0)">
<ellipse cx="522.6" cy="245" rx="17" ry="7.6" fill="#cfcdd8"/>
<ellipse cx="522.6" cy="243.3" rx="17" ry="7.6" fill="#f3f2f6"/>
<path d="M510 226.5h2.5v-3.2h3.5v-2.3h4v1.5h6v-1.5h4v2.3h3v3.2h2.6V244q-12.8 5.5-25.6 0z" fill="#d7b612"/>
<g fill="#edd026"><rect x="511" y="227" width="3.6" height="6" rx="1"/><rect x="516" y="224" width="4.5" height="9" rx="1"/><rect x="522" y="225" width="5" height="8" rx="1"/><rect x="528.5" y="224" width="4.5" height="9" rx="1"/><rect x="511" y="235" width="3.6" height="9" rx="1"/><rect x="516" y="235" width="4.5" height="11" rx="1"/><rect x="522" y="235" width="5" height="11.5" rx="1"/><rect x="528.5" y="235" width="4.5" height="10.5" rx="1"/><rect x="534" y="227" width="1.2" height="16" /></g>
<g fill="#f6e468" opacity="0.8"><rect x="517" y="225" width="2" height="3"/><rect x="523" y="226" width="2" height="3"/><rect x="517" y="236" width="2" height="3"/><rect x="523" y="236" width="2" height="3"/></g>
<path d="M510.5 233.8h24.6" stroke="#b39510" stroke-width="1"/>
<rect x="518.4" y="201" width="8.8" height="26.4" fill="#dcdbe3"/>
<rect x="519.3" y="201" width="4" height="26.4" fill="#efeff3"/>
<ellipse cx="522.8" cy="201" rx="4.4" ry="1.6" fill="#f6f6f8"/>
</g>
<g transform="translate(64.4,0)">
<ellipse cx="522.6" cy="245" rx="17" ry="7.6" fill="#cfcdd8"/>
<ellipse cx="522.6" cy="243.3" rx="17" ry="7.6" fill="#f3f2f6"/>
<path d="M510 226.5h2.5v-3.2h3.5v-2.3h4v1.5h6v-1.5h4v2.3h3v3.2h2.6V244q-12.8 5.5-25.6 0z" fill="#d7b612"/>
<g fill="#edd026"><rect x="511" y="227" width="3.6" height="6" rx="1"/><rect x="516" y="224" width="4.5" height="9" rx="1"/><rect x="522" y="225" width="5" height="8" rx="1"/><rect x="528.5" y="224" width="4.5" height="9" rx="1"/><rect x="511" y="235" width="3.6" height="9" rx="1"/><rect x="516" y="235" width="4.5" height="11" rx="1"/><rect x="522" y="235" width="5" height="11.5" rx="1"/><rect x="528.5" y="235" width="4.5" height="10.5" rx="1"/><rect x="534" y="227" width="1.2" height="16" /></g>
<g fill="#f6e468" opacity="0.8"><rect x="517" y="225" width="2" height="3"/><rect x="523" y="226" width="2" height="3"/><rect x="517" y="236" width="2" height="3"/><rect x="523" y="236" width="2" height="3"/></g>
<path d="M510.5 233.8h24.6" stroke="#b39510" stroke-width="1"/>
<rect x="518.4" y="201" width="8.8" height="26.4" fill="#dcdbe3"/>
<rect x="519.3" y="201" width="4" height="26.4" fill="#efeff3"/>
<ellipse cx="522.8" cy="201" rx="4.4" ry="1.6" fill="#f6f6f8"/>
</g>
<!-- cursor -->
<path d="M624.5 234v10l2.3-2.2l1.6 3.3l1.3-0.6l-1.5-3.2h3.2z" fill="#222" stroke="#e8e8e8" stroke-width="0.7"/>
</svg>
<div class="a" style="left:0;top:0;width:1.6px;height:302px;background:#1c0f1b"></div>
<div class="t" style="left:56.3px;top:8.2px;font-size:15.5px;letter-spacing:-0.4px;font-weight:bold;color:#fff;text-shadow:0 0 1.5px #1a0018">Level 1</div>
<div class="a" style="left:0.5px;top:302px;width:162.5px;height:23px;background:#fff"></div>
<div class="t" style="left:54.3px;top:304.5px;font-size:9px;font-weight:bold;color:#262626">This is a Test</div>
<div class="t" style="left:46.6px;top:315.2px;font-size:9px;font-weight:bold;color:#262626">Adaptive Banner</div>

</div>

<!-- ===== PROJECT PANEL ===== -->
<div class="a" style="left:0;top:379px;width:638px;height:12px;background:#1e1e1f"></div>
<div class="a" style="left:0;top:380px;width:42px;height:11px;background:#2b2b2b"></div>
<svg class="a" style="left:1px;top:382.5px" width="7" height="6"><path d="M0.2 0.5h2.5l0.7 0.8h3.4v4.5H0.2z" fill="#c0c0c0"/></svg>
<div class="t" style="left:9.6px;top:382.5px;font-size:7.3px;color:#c4c4c4">Project</div>
<svg class="a" style="left:47.5px;top:382px" width="7" height="7"><rect x="0.5" y="0.5" width="6" height="6" rx="0.8" fill="#c0c0c0"/><path d="M1.7 2h3.6M1.7 3.5h3.6M1.7 5h3.6" stroke="#3a3a3a" stroke-width="0.5"/></svg>
<div class="t" style="left:55.8px;top:382px;font-size:7.2px;color:#b8b8b8">Console</div>
<svg class="a" style="left:619px;top:381.5px" width="6" height="7"><path d="M0.9 2.2Q1.2 0.5 3 0.5Q4.9 0.5 4.9 2.4V6.6" fill="none" stroke="#c4c4c4" stroke-width="0.9"/><rect x="0.7" y="3.6" width="4.6" height="3" rx="1.4" fill="none" stroke="#c4c4c4" stroke-width="0.9"/></svg>
<svg class="a" style="left:629.5px;top:381px" width="3" height="8"><circle cx="1.5" cy="1" r="0.8" fill="#bbb"/><circle cx="1.5" cy="3.8" r="0.8" fill="#bbb"/><circle cx="1.5" cy="6.6" r="0.8" fill="#bbb"/></svg>
<div class="a" style="left:0;top:391px;width:638px;height:11px;background:#262626"></div>
<svg class="a" style="left:1px;top:392px" width="8" height="8"><path d="M3.8 0.8v6.4M0.6 4h6.4" stroke="#d4d4d4" stroke-width="1.5"/></svg>
<svg class="a" style="left:10px;top:394.5px" width="5" height="4"><path d="M0 0.3h4.5l-2.25 2.8z" fill="#c8c8c8"/></svg>
<div class="a" style="left:375.5px;top:392.8px;width:170px;height:8.3px;background:#1c1c1c;border-radius:2px"></div>
<svg class="a" style="left:377.5px;top:394.3px" width="6" height="6"><circle cx="2.3" cy="2.3" r="1.6" fill="none" stroke="#aaa" stroke-width="0.8"/><path d="M3.5 3.5L5.3 5.3" stroke="#aaa" stroke-width="0.9"/></svg>
<svg class="a" style="left:546px;top:391.5px" width="91" height="11">
<rect x="1" y="2" width="6.5" height="6.5" rx="1" fill="none" stroke="#bbb" stroke-width="0.8"/><circle cx="3.3" cy="6" r="1.7" fill="#262626" stroke="#bbb" stroke-width="0.7"/>
<circle cx="16.5" cy="3" r="1.8" fill="#c0c0c0"/><path d="M14 8.5q0-4 2.5-4q2 0 2.5 2l1.5 2z" fill="#c0c0c0"/><path d="M18 6.5l2.5 2.5" stroke="#c0c0c0" stroke-width="0.9"/>
<path d="M30.5 2.5h3.5l1.5 1.5l-4 4l-3-3z" fill="#c0c0c0" transform="rotate(-5 32 5)"/>
<circle cx="47.3" cy="5" r="3.8" fill="#d0d0d0"/><rect x="46.6" y="2.3" width="1.4" height="3.4" fill="#262626"/><rect x="46.6" y="6.4" width="1.4" height="1.2" fill="#262626"/>
<path d="M62.4 1.8l1 2.2l2.3 0.2l-1.8 1.5l0.6 2.3l-2.1-1.2l-2.1 1.2l0.6-2.3l-1.8-1.5l2.3-0.2z" fill="#9a9a9a"/>
<path d="M73 5q3.5-3.8 7.5 0q-3.5 3.8-7.5 0z" fill="none" stroke="#bbb" stroke-width="0.9"/><path d="M73.5 8.5l7-7" stroke="#bbb" stroke-width="0.9"/>
</svg>
<div class="t" style="left:628.8px;top:393.6px;font-size:7px;color:#aaa;letter-spacing:-0.5px">16</div>
<div class="a" style="left:0;top:402px;width:161px;height:98px;background:#2c2a2c"></div>
<div class="a" style="left:161px;top:402px;width:7px;height:98px;background:#282828"></div>
<svg class="a" style="left:162px;top:405.5px" width="5" height="4"><path d="M0.3 3.4h4.2L2.4 0.3z" fill="#c8c8c8"/></svg>
<div class="a" style="left:162.3px;top:426px;width:4.2px;height:80px;background:#575757;border-radius:2px"></div>
<div class="a" style="left:168px;top:402px;width:470px;height:12.8px;background:#2f2f2f"></div>
<div class="a" style="left:168px;top:414.8px;width:470px;height:85.2px;background:#2b2a2b"></div>
<div class="t" style="left:170.8px;top:404.8px;font-size:7.2px;color:#a8a8a8">Assets</div>
<div class="t" style="left:195.6px;top:404.8px;font-size:7.2px;color:#8a8a8a">&gt;</div>
<div class="t" style="left:201.7px;top:404.8px;font-size:7.2px;color:#a8a8a8">GleyPlugins</div>
<div class="t" style="left:243.8px;top:404.8px;font-size:7.2px;color:#8a8a8a">&gt;</div>
<div class="t" style="left:250px;top:404.8px;font-size:7.2px;color:#a8a8a8">Ads</div>
<div class="t" style="left:266.2px;top:404.8px;font-size:7.2px;color:#8a8a8a">&gt;</div>
<div class="t" style="left:272.5px;top:404.8px;font-size:7.2px;color:#d8d8d8">Example</div>
<div class="a" style="left:20px;top:401.5px;width:60px;height:2.5px;overflow:hidden"><div class="t" style="left:0;top:-4.5px;font-size:7.2px;color:#888">All Conflicts</div></div>
<svg class="a" style="left:13.7px;top:406.8px" width="8" height="8"><circle cx="3.2" cy="3.2" r="2.3" fill="none" stroke="#c0c0c0" stroke-width="0.9"/><path d="M4.9 4.9L7.2 7.2" stroke="#c0c0c0" stroke-width="1"/></svg><div class="t" style="left:24px;top:406.7px;font-size:7.3px;color:#c0c0c0">All Excluded</div>
<svg class="a" style="left:13.7px;top:415.8px" width="8" height="8"><circle cx="3.2" cy="3.2" r="2.3" fill="none" stroke="#c0c0c0" stroke-width="0.9"/><path d="M4.9 4.9L7.2 7.2" stroke="#c0c0c0" stroke-width="1"/></svg><div class="t" style="left:24px;top:415.7px;font-size:7.3px;color:#c0c0c0">All Materials</div>
<svg class="a" style="left:13.7px;top:424.8px" width="8" height="8"><circle cx="3.2" cy="3.2" r="2.3" fill="none" stroke="#c0c0c0" stroke-width="0.9"/><path d="M4.9 4.9L7.2 7.2" stroke="#c0c0c0" stroke-width="1"/></svg><div class="t" style="left:24px;top:424.7px;font-size:7.3px;color:#c0c0c0">All Models</div>
<svg class="a" style="left:13.7px;top:433.8px" width="8" height="8"><circle cx="3.2" cy="3.2" r="2.3" fill="none" stroke="#c0c0c0" stroke-width="0.9"/><path d="M4.9 4.9L7.2 7.2" stroke="#c0c0c0" stroke-width="1"/></svg><div class="t" style="left:24px;top:433.7px;font-size:7.3px;color:#c0c0c0">All Prefabs</div>
<svg class="a" style="left:0px;top:453.5px" width="5" height="4"><path d="M0.2 0.3h4.2L2.3 3.4z" fill="#888"/></svg><svg class="a" style="left:6.3px;top:451.8px" width="9" height="7"><path d="M0.3 0.8h3l0.8 0.9h3.6v1.2H2L0.3 6.2z" fill="#c8c8c8"/><path d="M2 3.2h6.8L7.3 6.5H0.4z" fill="#c8c8c8"/></svg><div class="t" style="left:16.8px;top:452.0px;font-size:7.6px;font-weight:bold;color:#c8c8c8">Assets</div>
<svg class="a" style="left:8px;top:461.5px" width="4" height="5"><path d="M0.3 0.2L3.4 2.3L0.3 4.4z" fill="#888"/></svg><svg class="a" style="left:14.7px;top:460.8px" width="8" height="7"><path d="M0.3 0.8h2.8l0.8 0.9h3.8v4.8H0.3z" fill="#c8c8c8"/><path d="M0.3 2.4h7.4" stroke="#2e2c2e" stroke-width="0.5"/></svg><div class="t" style="left:23.8px;top:460.9px;font-size:7.15px;color:#c0c0c0">ExternalDependencyManager</div>
<svg class="a" style="left:8px;top:470px" width="4" height="5"><path d="M0.3 0.2L3.4 2.3L0.3 4.4z" fill="#888"/></svg><svg class="a" style="left:14.7px;top:469.3px" width="8" height="7"><path d="M0.3 0.8h2.8l0.8 0.9h3.8v4.8H0.3z" fill="#c8c8c8"/><path d="M0.3 2.4h7.4" stroke="#2e2c2e" stroke-width="0.5"/></svg><div class="t" style="left:23.8px;top:469.4px;font-size:7.2px;color:#c0c0c0">Feel</div>
<svg class="a" style="left:7.5px;top:480.5px" width="5" height="4"><path d="M0.2 0.3h4.2L2.3 3.4z" fill="#888"/></svg><svg class="a" style="left:14.2px;top:478.5px" width="9" height="7"><path d="M0.3 0.8h3l0.8 0.9h3.6v1.2H2L0.3 6.2z" fill="#c8c8c8"/><path d="M2 3.2h6.8L7.3 6.5H0.4z" fill="#c8c8c8"/></svg><div class="t" style="left:23.8px;top:478.8px;font-size:7.2px;color:#c0c0c0">GleyPlugins</div>
<svg class="a" style="left:16px;top:489px" width="4" height="5"><path d="M0.3 0.2L3.4 2.3L0.3 4.4z" fill="#888"/></svg><svg class="a" style="left:22.4px;top:487.8px" width="8" height="7"><path d="M0.3 0.8h2.8l0.8 0.9h3.8v4.8H0.3z" fill="#c8c8c8"/><path d="M0.3 2.4h7.4" stroke="#2e2c2e" stroke-width="0.5"/></svg><div class="t" style="left:32.2px;top:487.9px;font-size:7.2px;color:#c0c0c0">About</div>
<svg class="a" style="left:16px;top:498.5px" width="5" height="4"><path d="M0.2 0.3h4.2L2.3 3.4z" fill="#888"/></svg><svg class="a" style="left:22.4px;top:497px" width="9" height="7"><path d="M0.3 0.8h3l0.8 0.9h3.6v1.2H2L0.3 6.2z" fill="#c8c8c8"/><path d="M2 3.2h6.8L7.3 6.5H0.4z" fill="#c8c8c8"/></svg><div class="t" style="left:32.2px;top:497.1px;font-size:7.2px;color:#c0c0c0">Ads</div>
<svg class="a" style="left:183.3px;top:423.5px" width="42" height="49" viewBox="0 0 42 49"><path d="M3 0.5h28l10.5 10.5v35a3 3 0 0 1-3 3h-35.5a3 3 0 0 1-3-3v-42.5a3 3 0 0 1 3-3z" fill="#cbcbcb"/>
<g fill="#1f5a1f"><path d="M14.5 12.5h4l-3.5 25h-4z"/><path d="M24.5 12.5h4l-3.5 25h-4z"/><rect x="8" y="19" width="24" height="4"/><rect x="7" y="27" width="24" height="4"/></g></svg><svg class="a" style="left:244px;top:423.2px" width="42" height="48" viewBox="0 0 41.6 48"><path fill-rule="evenodd" fill="#cbcbcb" d="M20.8 0L41.6 12V36L20.8 48L0 36V12Z M19.2 0H22.4V8.6L30.2 13.4L20.8 18.6L11.1 13.4L19.2 8.6Z M7 19.8L16.9 25.5V37.1L7 31.8Z M34.6 19.8L24.7 25.5V37.1L34.6 31.8Z"/><path d="M0 35.4L7 31.2M41.6 35.4L34.6 31.2" stroke="#2b2a2b" stroke-width="1.3"/></svg><svg class="a" style="left:305.7px;top:423.5px" width="42" height="49" viewBox="0 0 42 49"><path d="M3 0.5h28l10.5 10.5v35a3 3 0 0 1-3 3h-35.5a3 3 0 0 1-3-3v-42.5a3 3 0 0 1 3-3z" fill="#cbcbcb"/>
<g fill="#1f5a1f"><path d="M14.5 12.5h4l-3.5 25h-4z"/><path d="M24.5 12.5h4l-3.5 25h-4z"/><rect x="8" y="19" width="24" height="4"/><rect x="7" y="27" width="24" height="4"/></g></svg><svg class="a" style="left:366.3px;top:423.2px" width="42" height="48" viewBox="0 0 41.6 48"><path fill-rule="evenodd" fill="#cbcbcb" d="M20.8 0L41.6 12V36L20.8 48L0 36V12Z M19.2 0H22.4V8.6L30.2 13.4L20.8 18.6L11.1 13.4L19.2 8.6Z M7 19.8L16.9 25.5V37.1L7 31.8Z M34.6 19.8L24.7 25.5V37.1L34.6 31.8Z"/><path d="M0 35.4L7 31.2M41.6 35.4L34.6 31.2" stroke="#2b2a2b" stroke-width="1.3"/></svg>
<div class="t" style="left:182px;top:475.8px;font-size:6.2px;color:#b0b0b0">Implementation</div>
<div class="t" style="left:243px;top:475.8px;font-size:6.2px;color:#b0b0b0">Implementation</div>
<div class="t" style="left:315px;top:475.8px;font-size:6.2px;color:#b0b0b0">TestAds</div>
<div class="t" style="left:367px;top:475.8px;font-size:6.2px;color:#b0b0b0">TestAdsScene</div>


<!-- ===== HIERARCHY ===== -->
<div class="a" style="left:638px;top:31px;width:2px;height:469px;background:#151515"></div>
<div class="a" style="left:640px;top:32px;width:54px;height:10px;background:#2b2b2b"></div>
<svg class="a" style="left:644px;top:34.3px" width="6" height="5"><path d="M0.3 0.5h5.4M0.3 2.3h5.4M0.3 4.1h5.4" stroke="#aaa" stroke-width="0.9"/><path d="M1.5 0.5v4M4 0.5v4" stroke="#aaa" stroke-width="0.7"/></svg>
<div class="t" style="left:653.3px;top:34.3px;font-size:7.3px;color:#c4c4c4">Hierarchy</div>
<svg class="a" style="left:748.5px;top:34px" width="6" height="7"><path d="M0.9 2.2Q1.2 0.5 3 0.5Q4.9 0.5 4.9 2.4V6.6" fill="none" stroke="#c4c4c4" stroke-width="0.9"/><rect x="0.7" y="3.6" width="4.6" height="3" rx="1.4" fill="none" stroke="#c4c4c4" stroke-width="0.9"/></svg>
<svg class="a" style="left:759.5px;top:33px" width="3" height="8"><circle cx="1.5" cy="1" r="0.8" fill="#bbb"/><circle cx="1.5" cy="3.8" r="0.8" fill="#bbb"/><circle cx="1.5" cy="6.6" r="0.8" fill="#bbb"/></svg>
<div class="a" style="left:640px;top:42px;width:128px;height:11px;background:#262626"></div>
<svg class="a" style="left:643px;top:44.5px" width="8" height="7"><path d="M3.9 0.3v6.4M0.6 3.5h6.6" stroke="#d8d8d8" stroke-width="1.6"/></svg>
<svg class="a" style="left:652.8px;top:46.8px" width="5" height="4"><path d="M0 0.3h4.5l-2.25 2.8z" fill="#d0d0d0"/></svg>
<div class="a" style="left:664.2px;top:43.3px;width:92px;height:8.8px;background:#1d1d1d;border-radius:2px"></div>
<svg class="a" style="left:666px;top:45px" width="7" height="6"><circle cx="2.4" cy="2.4" r="1.7" fill="none" stroke="#777" stroke-width="0.8"/><path d="M3.6 3.6L5.4 5.4" stroke="#777" stroke-width="0.9"/><path d="M5 1.5h1.5" stroke="#777" stroke-width="0.6"/></svg>
<div class="t" style="left:675px;top:44.5px;font-size:7.2px;color:#565656">All</div>
<svg class="a" style="left:757.5px;top:43.5px" width="9" height="9"><rect x="3" y="0.8" width="5.2" height="5.2" rx="1" fill="none" stroke="#bbb" stroke-width="0.8"/><circle cx="3" cy="6" r="2" fill="#262626" stroke="#bbb" stroke-width="0.8"/></svg>
<div class="a" style="left:640px;top:53px;width:128px;height:447px;background:#2e2c2e"></div>
<div class="a" style="left:640px;top:53px;width:17px;height:447px;background:#2a282a"></div>
<div class="a" style="left:640px;top:53px;width:128px;height:9.8px;background:#232223"></div>
<svg class="a" style="left:658.5px;top:56.2px" width="5" height="5"><path d="M0.2 0.5h4.4L2.4 4.2z" fill="#777"/></svg><svg class="a" style="left:666px;top:54.3px" width="9" height="9" viewBox="0 0 9 9"><circle cx="4.5" cy="4.5" r="4" fill="#e4e4e4"/><g fill="#2a2a2a"><path d="M4.5 1.2L5.5 3.2H3.5Z"/><path d="M1.6 6.2L3.4 5.3L3.7 7.2Z"/><path d="M7.4 6.2L5.6 5.3L5.3 7.2Z"/><circle cx="4.5" cy="4.7" r="0.9"/></g></svg>
<div class="t" style="left:676.8px;top:55.3px;font-size:7.3px;font-weight:bold;color:#d0d0d0">Game</div>
<svg class="a" style="left:760px;top:54.5px" width="3" height="8"><circle cx="1.5" cy="1" r="0.8" fill="#bbb"/><circle cx="1.5" cy="3.8" r="0.8" fill="#bbb"/><circle cx="1.5" cy="6.6" r="0.8" fill="#bbb"/></svg>
<!--HITEMS-->
<svg class="a" style="left:673.5px;top:63.00px" width="9" height="9" viewBox="0 0 9 9"><path d="M4.5 0.6L7.9 2.5V6.5L4.5 8.4L1.1 6.5V2.5Z" fill="none" stroke="#bdbdbd" stroke-width="1" stroke-linejoin="round"/><path d="M2.3 3.1L4.5 4.5L6.7 3.1M4.5 4.5V7.2" stroke="#bdbdbd" stroke-width="1" fill="none"/></svg><div class="t" style="left:684px;top:64.30px;font-size:7.2px;color:#c4c4c4">Directional Light</div>
<svg class="a" style="left:673.5px;top:72.08px" width="9" height="9" viewBox="0 0 9 9"><path d="M4.5 0.6L7.9 2.5V6.5L4.5 8.4L1.1 6.5V2.5Z" fill="none" stroke="#bdbdbd" stroke-width="1" stroke-linejoin="round"/><path d="M2.3 3.1L4.5 4.5L6.7 3.1M4.5 4.5V7.2" stroke="#bdbdbd" stroke-width="1" fill="none"/></svg><div class="t" style="left:684px;top:73.38px;font-size:7.2px;color:#c4c4c4">EventSystem</div>
<svg class="a" style="left:667px;top:83.36px" width="5" height="5"><path d="M0.3 0.3L4.2 2.3L0.3 4.3z" fill="#6a6a6a"/></svg><svg class="a" style="left:673.5px;top:81.16px" width="9" height="9" viewBox="0 0 9 9"><path d="M4.5 0.6L7.9 2.5V6.5L4.5 8.4L1.1 6.5V2.5Z" fill="none" stroke="#bdbdbd" stroke-width="1" stroke-linejoin="round"/><path d="M2.3 3.1L4.5 4.5L6.7 3.1M4.5 4.5V7.2" stroke="#bdbdbd" stroke-width="1" fill="none"/></svg><div class="t" style="left:684px;top:82.46px;font-size:7.2px;color:#c4c4c4">Feedbacks</div>
<svg class="a" style="left:673.5px;top:90.24px" width="9" height="9" viewBox="0 0 9 9"><path d="M4.5 0.6L7.9 2.5V6.5L4.5 8.4L1.1 6.5V2.5Z" fill="none" stroke="#bdbdbd" stroke-width="1" stroke-linejoin="round"/><path d="M2.3 3.1L4.5 4.5L6.7 3.1M4.5 4.5V7.2" stroke="#bdbdbd" stroke-width="1" fill="none"/></svg><div class="t" style="left:684px;top:91.54px;font-size:7.2px;color:#c4c4c4">GameManager</div>
<svg class="a" style="left:667px;top:101.52px" width="5" height="5"><path d="M0.3 0.3L4.2 2.3L0.3 4.3z" fill="#6a6a6a"/></svg><svg class="a" style="left:673.5px;top:99.32px" width="9" height="9" viewBox="0 0 9 9"><path d="M4.5 0.6L7.9 2.5V6.5L4.5 8.4L1.1 6.5V2.5Z" fill="none" stroke="#bdbdbd" stroke-width="1" stroke-linejoin="round"/><path d="M2.3 3.1L4.5 4.5L6.7 3.1M4.5 4.5V7.2" stroke="#bdbdbd" stroke-width="1" fill="none"/></svg><div class="t" style="left:684px;top:100.62px;font-size:7.2px;color:#c4c4c4">Levels</div>
<svg class="a" style="left:673.5px;top:108.40px" width="9" height="9" viewBox="0 0 9 9"><path d="M4.5 0.6L7.9 2.5V6.5L4.5 8.4L1.1 6.5V2.5Z" fill="none" stroke="#bdbdbd" stroke-width="1" stroke-linejoin="round"/><path d="M2.3 3.1L4.5 4.5L6.7 3.1M4.5 4.5V7.2" stroke="#bdbdbd" stroke-width="1" fill="none"/></svg><div class="t" style="left:684px;top:109.70px;font-size:7.2px;color:#c4c4c4">Main Camera</div>
<svg class="a" style="left:673.5px;top:117.48px" width="9" height="9" viewBox="0 0 9 9"><path d="M4.5 0.6L7.9 2.5V6.5L4.5 8.4L1.1 6.5V2.5Z" fill="none" stroke="#bdbdbd" stroke-width="1" stroke-linejoin="round"/><path d="M2.3 3.1L4.5 4.5L6.7 3.1M4.5 4.5V7.2" stroke="#bdbdbd" stroke-width="1" fill="none"/></svg><div class="t" style="left:684px;top:118.78px;font-size:7.2px;color:#c4c4c4">Plane</div>
<svg class="a" style="left:673.5px;top:126.56px" width="9" height="9" viewBox="0 0 9 9"><path d="M4.5 0.6L7.9 2.5V6.5L4.5 8.4L1.1 6.5V2.5Z" fill="none" stroke="#bdbdbd" stroke-width="1" stroke-linejoin="round"/><path d="M2.3 3.1L4.5 4.5L6.7 3.1M4.5 4.5V7.2" stroke="#bdbdbd" stroke-width="1" fill="none"/></svg><div class="t" style="left:684px;top:127.86px;font-size:7.2px;color:#c4c4c4">PostProcessing</div>
<svg class="a" style="left:673.5px;top:135.64px" width="9" height="9" viewBox="0 0 9 9"><path d="M4.5 0.6L7.9 2.5V6.5L4.5 8.4L1.1 6.5V2.5Z" fill="none" stroke="#bdbdbd" stroke-width="1" stroke-linejoin="round"/><path d="M2.3 3.1L4.5 4.5L6.7 3.1M4.5 4.5V7.2" stroke="#bdbdbd" stroke-width="1" fill="none"/></svg><div class="t" style="left:684px;top:136.94px;font-size:7.2px;color:#c4c4c4">TargetFramerate</div>
<svg class="a" style="left:667px;top:146.92px" width="5" height="5"><path d="M0.3 0.3L4.2 2.3L0.3 4.3z" fill="#6a6a6a"/></svg><svg class="a" style="left:673.5px;top:144.72px" width="9" height="9" viewBox="0 0 9 9"><path d="M4.5 0.6L7.9 2.5V6.5L4.5 8.4L1.1 6.5V2.5Z" fill="none" stroke="#bdbdbd" stroke-width="1" stroke-linejoin="round"/><path d="M2.3 3.1L4.5 4.5L6.7 3.1M4.5 4.5V7.2" stroke="#bdbdbd" stroke-width="1" fill="none"/></svg><div class="t" style="left:684px;top:146.02px;font-size:7.2px;color:#c4c4c4">UIManager</div>
<svg class="a" style="left:673.5px;top:153.80px" width="9" height="9" viewBox="0 0 9 9"><path d="M4.5 0.6L7.9 2.5V6.5L4.5 8.4L1.1 6.5V2.5Z" fill="none" stroke="#bdbdbd" stroke-width="1" stroke-linejoin="round"/><path d="M2.3 3.1L4.5 4.5L6.7 3.1M4.5 4.5V7.2" stroke="#bdbdbd" stroke-width="1" fill="none"/></svg><div class="t" style="left:684px;top:155.10px;font-size:7.2px;color:#c4c4c4">AdManager</div>
<svg class="a" style="left:673.5px;top:162.88px" width="9" height="9" viewBox="0 0 9 9"><path d="M4.5 0.6L7.9 2.5V6.5L4.5 8.4L1.1 6.5V2.5Z" fill="none" stroke="#bdbdbd" stroke-width="1" stroke-linejoin="round"/><path d="M2.3 3.1L4.5 4.5L6.7 3.1M4.5 4.5V7.2" stroke="#bdbdbd" stroke-width="1" fill="none"/></svg><div class="t" style="left:684px;top:164.18px;font-size:7.2px;color:#c4c4c4">New Game Object</div>
<svg class="a" style="left:667px;top:174.16px" width="5" height="5"><path d="M0.3 0.3L4.2 2.3L0.3 4.3z" fill="#6a6a6a"/></svg><svg class="a" style="left:673.5px;top:171.96px" width="9" height="9" viewBox="0 0 9 9"><path d="M4.5 0.6L7.9 2.5V6.5L4.5 8.4L1.1 6.5V2.5Z" fill="none" stroke="#bdbdbd" stroke-width="1" stroke-linejoin="round"/><path d="M2.3 3.1L4.5 4.5L6.7 3.1M4.5 4.5V7.2" stroke="#bdbdbd" stroke-width="1" fill="none"/></svg><div class="t" style="left:684px;top:173.26px;font-size:7.2px;color:#c4c4c4">ADAPTIVE(Clone)</div>
<div class="a" style="left:640px;top:181px;width:128px;height:9.5px;background:#232223"></div>
<svg class="a" style="left:659.5px;top:183.5px" width="5" height="5"><path d="M0.3 0.3L4.2 2.3L0.3 4.3z" fill="#777"/></svg><svg class="a" style="left:666px;top:181.2px" width="9" height="9" viewBox="0 0 9 9"><circle cx="4.5" cy="4.5" r="4" fill="#e4e4e4"/><g fill="#2a2a2a"><path d="M4.5 1.2L5.5 3.2H3.5Z"/><path d="M1.6 6.2L3.4 5.3L3.7 7.2Z"/><path d="M7.4 6.2L5.6 5.3L5.3 7.2Z"/><circle cx="4.5" cy="4.7" r="0.9"/></g></svg>
<div class="t" style="left:676px;top:183.0px;font-size:7.15px;color:#c8c8c8">DontDestroyOnLoad</div>
<svg class="a" style="left:760px;top:182px" width="3" height="8"><circle cx="1.5" cy="1" r="0.8" fill="#bbb"/><circle cx="1.5" cy="3.8" r="0.8" fill="#bbb"/><circle cx="1.5" cy="6.6" r="0.8" fill="#bbb"/></svg>


<!-- ===== INSPECTOR ===== -->
<div class="a" style="left:768px;top:31px;width:2px;height:469px;background:#151515"></div>
<div class="a" style="left:770px;top:32px;width:52px;height:10px;background:#2b2b2b"></div>
<svg class="a" style="left:774.5px;top:34.5px" width="6" height="6"><circle cx="3" cy="3" r="2.8" fill="#c8c8c8"/><rect x="2.5" y="2.4" width="1" height="2.6" fill="#2b2b2b"/><rect x="2.5" y="1" width="1" height="0.9" fill="#2b2b2b"/></svg>
<div class="t" style="left:783px;top:34.3px;font-size:7.2px;color:#c4c4c4">Inspector</div>
<svg class="a" style="left:827px;top:33.5px" width="8" height="8" viewBox="0 0 8 8"><path d="M4 0.3l0.8 1.2l1.4-0.3l0.1 1.4l1.3 0.6l-0.7 1.2l0.7 1.2l-1.3 0.6l-0.1 1.4l-1.4-0.3L4 7.7L3.2 6.5L1.8 6.8L1.7 5.4L0.4 4.8L1.1 3.6L0.4 2.4L1.7 1.8L1.8 0.4L3.2 0.7z" fill="#c0c0c0"/><circle cx="4" cy="4" r="1.3" fill="#1b1b1c"/></svg>
<div class="t" style="left:836px;top:34.3px;font-size:7.3px;color:#b8b8b8">Project Settings</div>
<svg class="a" style="left:1064.5px;top:34px" width="6" height="7"><path d="M0.9 2.2Q1.2 0.5 3 0.5Q4.9 0.5 4.9 2.4V6.6" fill="none" stroke="#c4c4c4" stroke-width="0.9"/><rect x="0.7" y="3.6" width="4.6" height="3" rx="1.4" fill="none" stroke="#c4c4c4" stroke-width="0.9"/></svg>
<svg class="a" style="left:1075.5px;top:33px" width="3" height="8"><circle cx="1.5" cy="1" r="0.8" fill="#bbb"/><circle cx="1.5" cy="3.8" r="0.8" fill="#bbb"/><circle cx="1.5" cy="6.6" r="0.8" fill="#bbb"/></svg>
<div class="a" style="left:770px;top:42px;width:310px;height:458px;background:#2e2c2e"></div>
</body></html>
